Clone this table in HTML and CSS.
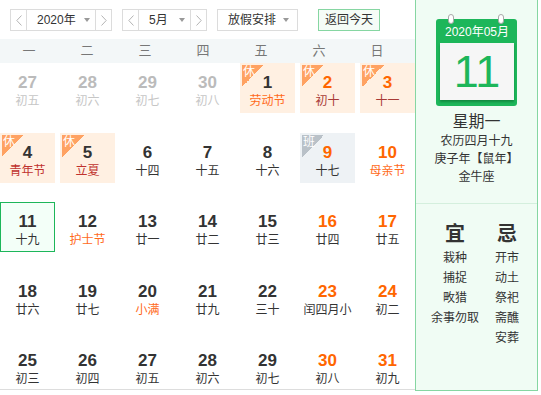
FILE: index.html
```html
<!DOCTYPE html>
<html lang="zh-CN">
<head>
<meta charset="utf-8">
<title>万年历</title>
<link rel="stylesheet" href="styles.css">
</head>
<body>
<div class="page">
  <div class="main">
    <div class="toolbar">
      <div class="sel sel-year">
        <span class="arrow arrow-l"><svg width="6" height="11" viewBox="0 0 6 11"><polyline points="5.5,0.5 0.8,5.5 5.5,10.5" fill="none" stroke="#b4b4b4" stroke-width="1"/></svg></span>
        <span class="mid"><span>2020年</span><i class="caret"></i></span>
        <span class="arrow arrow-r"><svg width="6" height="11" viewBox="0 0 6 11"><polyline points="0.5,0.5 5.2,5.5 0.5,10.5" fill="none" stroke="#b4b4b4" stroke-width="1"/></svg></span>
      </div>
      <div class="sel sel-month">
        <span class="arrow arrow-l"><svg width="6" height="11" viewBox="0 0 6 11"><polyline points="5.5,0.5 0.8,5.5 5.5,10.5" fill="none" stroke="#b4b4b4" stroke-width="1"/></svg></span>
        <span class="mid"><span>5月</span><i class="caret"></i></span>
        <span class="arrow arrow-r"><svg width="6" height="11" viewBox="0 0 6 11"><polyline points="0.5,0.5 5.2,5.5 0.5,10.5" fill="none" stroke="#b4b4b4" stroke-width="1"/></svg></span>
      </div>
      <div class="sel sel-holiday">
        <span class="mid"><span>放假安排</span><i class="caret"></i></span>
      </div>
      <div class="today-btn">返回今天</div>
    </div>

    <div class="weekdays">
      <span>一</span><span>二</span><span>三</span><span>四</span><span>五</span><span>六</span><span>日</span>
    </div>

    <div class="grid">
      <div class="cell prev"><div class="num">27</div><div class="lunar">初五</div></div>
      <div class="cell prev"><div class="num">28</div><div class="lunar">初六</div></div>
      <div class="cell prev"><div class="num">29</div><div class="lunar">初七</div></div>
      <div class="cell prev"><div class="num">30</div><div class="lunar">初八</div></div>
      <div class="cell hol"><span class="tag">休</span><div class="num">1</div><div class="lunar fest">劳动节</div></div>
      <div class="cell hol wk"><span class="tag">休</span><div class="num">2</div><div class="lunar">初十</div></div>
      <div class="cell hol wk"><span class="tag">休</span><div class="num">3</div><div class="lunar">十一</div></div>

      <div class="cell hol"><span class="tag">休</span><div class="num">4</div><div class="lunar red">青年节</div></div>
      <div class="cell hol"><span class="tag">休</span><div class="num">5</div><div class="lunar red">立夏</div></div>
      <div class="cell"><div class="num">6</div><div class="lunar">十四</div></div>
      <div class="cell"><div class="num">7</div><div class="lunar">十五</div></div>
      <div class="cell"><div class="num">8</div><div class="lunar">十六</div></div>
      <div class="cell work wk"><span class="tag tag-work">班</span><div class="num">9</div><div class="lunar">十七</div></div>
      <div class="cell wk"><div class="num">10</div><div class="lunar fest">母亲节</div></div>

      <div class="cell today"><div class="num">11</div><div class="lunar">十九</div></div>
      <div class="cell"><div class="num">12</div><div class="lunar fest">护士节</div></div>
      <div class="cell"><div class="num">13</div><div class="lunar">廿一</div></div>
      <div class="cell"><div class="num">14</div><div class="lunar">廿二</div></div>
      <div class="cell"><div class="num">15</div><div class="lunar">廿三</div></div>
      <div class="cell wk"><div class="num">16</div><div class="lunar">廿四</div></div>
      <div class="cell wk"><div class="num">17</div><div class="lunar">廿五</div></div>

      <div class="cell"><div class="num">18</div><div class="lunar">廿六</div></div>
      <div class="cell"><div class="num">19</div><div class="lunar">廿七</div></div>
      <div class="cell"><div class="num">20</div><div class="lunar fest">小满</div></div>
      <div class="cell"><div class="num">21</div><div class="lunar">廿九</div></div>
      <div class="cell"><div class="num">22</div><div class="lunar">三十</div></div>
      <div class="cell wk"><div class="num">23</div><div class="lunar">闰四月小</div></div>
      <div class="cell wk"><div class="num">24</div><div class="lunar">初二</div></div>

      <div class="cell"><div class="num">25</div><div class="lunar">初三</div></div>
      <div class="cell"><div class="num">26</div><div class="lunar">初四</div></div>
      <div class="cell"><div class="num">27</div><div class="lunar">初五</div></div>
      <div class="cell"><div class="num">28</div><div class="lunar">初六</div></div>
      <div class="cell"><div class="num">29</div><div class="lunar">初七</div></div>
      <div class="cell wk"><div class="num">30</div><div class="lunar">初八</div></div>
      <div class="cell wk"><div class="num">31</div><div class="lunar">初九</div></div>
    </div>
  </div>

  <aside class="panel">
    <div class="cal-icon">
      <span class="ring ring-l"></span>
      <span class="ring ring-r"></span>
      <div class="cal-head">2020年05月</div>
      <div class="cal-day">11</div>
    </div>
    <div class="info">
      <div class="weekday">星期一</div>
      <div class="info-line">农历四月十九</div>
      <div class="info-line">庚子年【鼠年】</div>
      <div class="info-line">金牛座</div>
    </div>
    <div class="yiji">
      <div class="col">
        <div class="yj-title">宜</div>
        <div class="yj-item">栽种</div>
        <div class="yj-item">捕捉</div>
        <div class="yj-item">畋猎</div>
        <div class="yj-item">余事勿取</div>
      </div>
      <div class="col">
        <div class="yj-title">忌</div>
        <div class="yj-item">开市</div>
        <div class="yj-item">动土</div>
        <div class="yj-item">祭祀</div>
        <div class="yj-item">斋醮</div>
        <div class="yj-item">安葬</div>
      </div>
    </div>
  </aside>
</div>
</body>
</html>
```

FILE: styles.css
```css
* {
  box-sizing: border-box;
}

html, body {
  margin: 0;
  padding: 0;
  background: #ffffff;
}

body {
  font-family: "Liberation Sans", "Noto Sans CJK SC", sans-serif;
  color: #333333;
  font-size: 12px;
}

.page {
  display: flex;
  align-items: flex-start;
  width: 538px;
}

.main {
  width: 415px;
  flex: none;
}

/* toolbar */
.toolbar {
  display: flex;
  align-items: flex-end;
  height: 39px;
  padding: 0 0 8px 10px;
}

.sel {
  display: flex;
  height: 22px;
  border: 1px solid #dcdcdc;
  background: #ffffff;
  margin-right: 10px;
}

.sel-year { width: 102px; }
.sel-month { width: 85px; }
.sel-holiday { width: 81px; }

.arrow {
  width: 16px;
  flex: none;
  display: flex;
  align-items: center;
  justify-content: center;
}

.arrow-l { border-right: 1px solid #dcdcdc; }
.arrow-r { border-left: 1px solid #dcdcdc; }

.mid {
  flex: 1;
  display: flex;
  align-items: center;
  justify-content: space-between;
  padding: 0 5px 0 10px;
  font-size: 12px;
  line-height: 20px;
  color: #333333;
}

.sel-holiday .mid {
  padding: 0 8px 0 10px;
}

.caret {
  width: 0;
  height: 0;
  border-left: 3.5px solid transparent;
  border-right: 3.5px solid transparent;
  border-top: 4px solid #999999;
}

.today-btn {
  height: 22px;
  width: 62px;
  margin-left: 10px;
  border: 1px solid #86d6a2;
  background: #f5fcf7;
  text-align: center;
  font-size: 12px;
  line-height: 20px;
  color: #333333;
}

/* week header */
.weekdays {
  display: grid;
  grid-template-columns: repeat(7, 58px);
  height: 24px;
  background: #f3f7f8;
  font-size: 13px;
  line-height: 24px;
  color: #777777;
  text-align: center;
}

/* day grid */
.grid {
  display: grid;
  grid-template-columns: repeat(7, 55px);
  grid-template-rows: repeat(5, 50px);
  column-gap: 5px;
  row-gap: 19.5px;
  height: 327px;
  border-bottom: 1px solid #dddddd;
  align-content: start;
}

.cell {
  position: relative;
  height: 50px;
  padding-top: 11px;
  text-align: center;
}

.num {
  font-size: 17px;
  font-weight: bold;
  line-height: 18px;
  color: #333333;
}

.lunar {
  margin-top: 1px;
  font-size: 12px;
  line-height: 16px;
  color: #333333;
  white-space: nowrap;
}

.prev .num { color: #bbbbbb; }
.prev .lunar { color: #c6c6c6; }

.wk .num { color: #ff6600; }

.hol { background: #fff0e2; }
.hol .lunar { color: #a83a36; }
.lunar.red { color: #c0322e; }
.lunar.fest { color: #ff6a1a; }

.work { background: #eef2f5; }

.today {
  border: 1px solid #1db65a;
  background: #f3fff8;
  padding-top: 10px;
}

.tag {
  position: absolute;
  left: 2px;
  top: 2px;
  width: 22px;
  height: 22px;
  background: linear-gradient(135deg, #ffa262 50%, transparent 50%);
  color: #ffffff;
  font-size: 12px;
  line-height: 15px;
  text-align: left;
  padding-left: 1px;
}

.tag-work {
  background: linear-gradient(135deg, #b9c1c8 50%, transparent 50%);
}

/* right panel */
.panel {
  width: 123px;
  height: 391px;
  flex: none;
  background: #f0fcf4;
  border-left: 1px solid #86d6a2;
  border-right: 1px solid #86d6a2;
  border-bottom: 1px solid #86d6a2;
  text-align: center;
}

.cal-icon {
  position: relative;
  width: 81px;
  height: 87px;
  margin: 19px auto 0;
  padding: 2px 3px 6px 4px;
  background: #1db65a;
  border-radius: 3px;
}

.ring {
  position: absolute;
  top: -5px;
  width: 6px;
  height: 10px;
  background: #ffffff;
  border: 1px solid #a9a9a9;
  border-radius: 3px;
}

.ring-l { left: 12px; }
.ring-r { left: 62px; }

.cal-head {
  height: 22px;
  line-height: 22px;
  color: #ffffff;
  font-size: 12px;
}

.cal-day {
  height: 57px;
  background: #f6f6f6;
  box-shadow: 0 2px 2px rgba(0, 60, 20, 0.35);
  color: #1db65a;
  font-size: 45px;
  line-height: 57px;
}

.info {
  padding: 6px 0 17px;
  border-bottom: 1px solid #d4efdd;
}

.weekday {
  font-size: 16px;
  line-height: 20px;
}

.info-line {
  font-size: 12px;
  line-height: 18px;
}

.yiji {
  display: grid;
  grid-template-columns: 56px 48px;
  padding: 18px 0 0 11px;
}

.yj-title {
  font-size: 20px;
  font-weight: bold;
  line-height: 24px;
  margin-bottom: 2px;
}

.yj-item {
  font-size: 12px;
  line-height: 20px;
  white-space: nowrap;
}
```
